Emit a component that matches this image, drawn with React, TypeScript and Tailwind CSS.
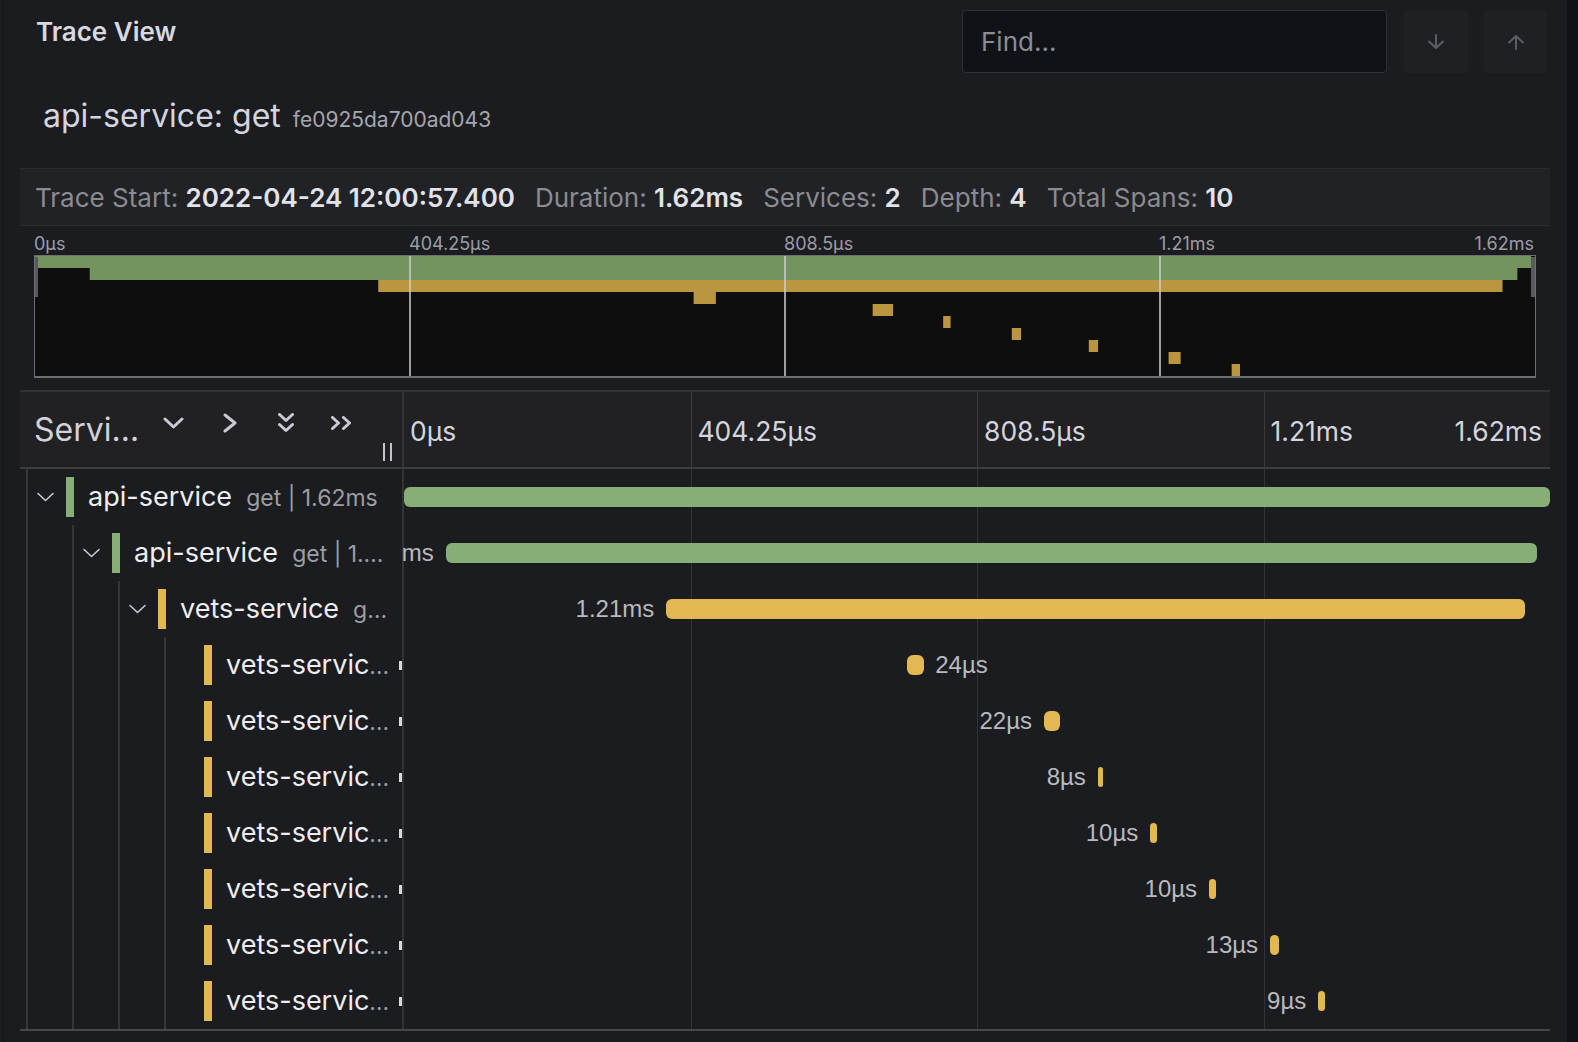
import React from "react";

// total trace duration in µs
const TOTAL = 1617;

type Span = {
  name: string;
  op: string;
  depth: number;
  kids: boolean;
  color: "green" | "yellow";
  start: number;
  dur: number;
  label: string;
  side: "left" | "right";
};

const spans: Span[] = [
  { name: "api-service", op: "get | 1.62ms", depth: 0, kids: true, color: "green", start: 0, dur: 1617, label: "1.62ms", side: "left" },
  { name: "api-service", op: "get | 1.54ms", depth: 1, kids: true, color: "green", start: 59, dur: 1539, label: "1.54ms", side: "left" },
  { name: "vets-service", op: "get | 1.21ms", depth: 2, kids: true, color: "yellow", start: 370, dur: 1212, label: "1.21ms", side: "left" },
  { name: "vets-service", op: "SELECT petclinic.vets", depth: 3, kids: false, color: "yellow", start: 710, dur: 24, label: "24µs", side: "right" },
  { name: "vets-service", op: "SELECT petclinic.specialties", depth: 3, kids: false, color: "yellow", start: 903, dur: 22, label: "22µs", side: "left" },
  { name: "vets-service", op: "SELECT petclinic.specialties", depth: 3, kids: false, color: "yellow", start: 979, dur: 8, label: "8µs", side: "left" },
  { name: "vets-service", op: "SELECT petclinic.specialties", depth: 3, kids: false, color: "yellow", start: 1053, dur: 10, label: "10µs", side: "left" },
  { name: "vets-service", op: "SELECT petclinic.specialties", depth: 3, kids: false, color: "yellow", start: 1136, dur: 10, label: "10µs", side: "left" },
  { name: "vets-service", op: "SELECT petclinic.specialties", depth: 3, kids: false, color: "yellow", start: 1222, dur: 13, label: "13µs", side: "left" },
  { name: "vets-service", op: "SELECT petclinic.specialties", depth: 3, kids: false, color: "yellow", start: 1290, dur: 9, label: "9µs", side: "left" },
];

const stats = [
  ["Trace Start:", "2022-04-24 12:00:57.400"],
  ["Duration:", "1.62ms"],
  ["Services:", "2"],
  ["Depth:", "4"],
  ["Total Spans:", "10"],
];

export default function App() {
  return (
    <div className="flex h-[1042px] w-full overflow-hidden bg-[#111217] font-['Inter',sans-serif]">
      <div className="flex h-full w-[1567px] shrink-0 flex-col bg-[#1b1c20] shadow-[inset_2px_0_0_#1d1e22,inset_4px_0_0_#151619]">
        {/* title + search */}
        <div className="flex items-start pl-[36px] pr-[20px] pt-[10px]">
          <div className="mt-[6px] text-[26px] font-semibold leading-[32px] text-[#d8d9e0]">Trace View</div>
          <div className="ml-auto flex h-[63px] w-[425px] items-center rounded-[4px] border border-[#2f3035] bg-[#111217] pl-[18px] text-[26px] text-[#8c8c96]">
            Find...
          </div>
          <button className="ml-[17px] flex h-[63px] w-[64px] items-center justify-center rounded-[2px] bg-[#1f2024]">
            <Arrow down />
          </button>
          <button className="ml-[16px] flex h-[63px] w-[63px] items-center justify-center rounded-[2px] bg-[#1f2024]">
            <Arrow />
          </button>
        </div>

        <div className="mt-[23px] flex h-[40px] items-baseline pl-[43px]">
          <span className="text-[32px] leading-[40px] text-[#d4d5de]">api-service: get</span>
          <span className="ml-[12px] text-[21px] text-[#a4a5ad]">fe0925da700ad043</span>
        </div>

        {/* stats */}
        <div className="ml-[20px] mr-[17px] mt-[32px] flex h-[58px] items-center gap-[20px] border-y border-[#2b2c30] bg-[#212225] pl-[15px] text-[26px]">
          {stats.map(([k, v]) => (
            <div key={k} className="whitespace-nowrap">
              <span className="text-[#8b8b92]">{k}</span>{" "}
              <span className="font-semibold text-[#e2e3ea]">{v}</span>
            </div>
          ))}
        </div>

        {/* minimap */}
        <div className="ml-[34px] grid h-[29px] w-[1500px] grid-cols-4 items-center pt-[4px] text-[18px] text-[#9c9ca4]">
          <span>0µs</span>
          <span>404.25µs</span>
          <span>808.5µs</span>
          <div className="flex justify-between">
            <span>1.21ms</span>
            <span>1.62ms</span>
          </div>
        </div>
        <div className="ml-[34px] w-[1502px] border border-b-2 border-[#6f6f73] bg-[#0e0e0f]">
          <Minimap />
        </div>

        {/* column header */}
        <div className="ml-[20px] mr-[17px] mt-[12px] flex h-[79px] shrink-0 border-y-2 border-b-[#3c3d41] border-t-[#313236] bg-[#212123]">
          <div className="flex w-[382px] shrink-0 items-center pl-[14px]">
            <div className="w-[112px] truncate text-[32px] text-[#d0d1db]">Service &amp; Operation</div>
            <div className="mb-[14px] ml-[17px] flex items-center text-[#c9cad4]">
              <svg width="21" height="12" viewBox="0 0 21 12" fill="none" stroke="currentColor" strokeWidth="3" strokeLinecap="round" strokeLinejoin="round">
                <path d="M2 2l8.5 8 8.5-8" />
              </svg>
              <svg className="ml-[39px]" width="14" height="20" viewBox="0 0 14 20" fill="none" stroke="currentColor" strokeWidth="3" strokeLinecap="round" strokeLinejoin="round">
                <path d="M2 2l10 8-10 8" />
              </svg>
              <svg className="ml-[41px]" width="16" height="20" viewBox="0 0 16 20" fill="none" stroke="currentColor" strokeWidth="3" strokeLinecap="round" strokeLinejoin="round">
                <path d="M1.5 1.5l6.5 6 6.5-6M1.5 11.5l6.5 6 6.5-6" />
              </svg>
              <svg className="ml-[37px]" width="21" height="14" viewBox="0 0 21 14" fill="none" stroke="currentColor" strokeWidth="3" strokeLinecap="round" strokeLinejoin="round">
                <path d="M1.5 1.5l6 5.5-6 5.5M12.5 1.5l6 5.5-6 5.5" />
              </svg>
            </div>
            <div className="mb-[6px] ml-[31px] flex gap-[5px] self-end">
              <div className="h-[18px] w-[2px] bg-[#c2c3cb]" />
              <div className="h-[18px] w-[2px] bg-[#c2c3cb]" />
            </div>
          </div>
          <div className="w-[2px] bg-[#333438]" />
          <div className="grid flex-1 grid-cols-4 text-[26.5px] text-[#d3d4de]">
            <div className="flex items-center pl-[6px] pt-[4px]">0µs</div>
            <div className="flex items-center border-l border-[#3a3b3f] pl-[6px] pt-[4px]">404.25µs</div>
            <div className="flex items-center border-l border-[#3a3b3f] pl-[6px] pt-[4px]">808.5µs</div>
            <div className="flex items-center justify-between border-l border-[#3a3b3f] pl-[6px] pr-[8px] pt-[4px]">
              <span>1.21ms</span>
              <span>1.62ms</span>
            </div>
          </div>
        </div>

        {/* span rows */}
        <div className="ml-[20px] mr-[17px] border-b-2 border-[#46474b]">
          {spans.map((s, i) => (
            <SpanRow key={i} s={s} />
          ))}
        </div>
      </div>
    </div>
  );
}

function Arrow({ down }: { down?: boolean }) {
  return (
    <svg width="18" height="16" viewBox="0 0 18 16" fill="none" stroke="#5c5d63" strokeWidth="2" strokeLinecap="round" strokeLinejoin="round">
      {down ? <path d="M9 1v13M2 7.5l7 6.5 7-6.5" /> : <path d="M9 15V2M2 8.5l7-6.5 7 6.5" />}
    </svg>
  );
}

function Minimap() {
  return (
    <svg className="block" width="1500" height="120" viewBox="0 0 1500 120">
      {spans.map((s, i) => {
        const x = (s.start / TOTAL) * 1500;
        const w = Math.max((s.dur / TOTAL) * 1500, 6);
        return (
          <rect
            key={i}
            x={x}
            y={i * 12}
            width={i === 0 ? 1496 : w}
            height={12}
            fill={s.color === "green" ? "#73935f" : "#b9963f"}
          />
        );
      })}
      <line x1="375" y1="0" x2="375" y2="120" stroke="#cfcfcf" strokeWidth="1.5" />
      <line x1="750" y1="0" x2="750" y2="120" stroke="#cfcfcf" strokeWidth="1.5" />
      <line x1="1125" y1="0" x2="1125" y2="120" stroke="#cfcfcf" strokeWidth="1.5" />
      <rect x="0" y="1" width="3" height="40" fill="#5a5a5e" />
      <rect x="1496" y="1" width="4" height="40" fill="#5a5a5e" />
    </svg>
  );
}

function SpanRow({ s }: { s: Span }) {
  const left = (s.start / TOTAL) * 100;
  const width = (s.dur / TOTAL) * 100;
  const green = s.color === "green";
  return (
    <div className="flex h-[56px]">
      <div className="relative z-10 flex h-full w-[382px] shrink-0 items-center bg-[#1b1c20]">
        {Array.from({ length: s.depth + 1 }).map((_, i) => (
          <div key={i} className="flex h-full w-[46px] shrink-0 items-center">
            <div className="ml-[6px] h-full w-[2px] bg-[#36373b]" />
            {i === s.depth && s.kids && (
              <svg className="ml-[9px]" width="17" height="10" viewBox="0 0 17 10" fill="none" stroke="#c9c9d1" strokeWidth="1.6" strokeLinecap="round" strokeLinejoin="round">
                <path d="M1 1.5l7.5 7 7.5-7" />
              </svg>
            )}
          </div>
        ))}
        <div className={`h-[40px] w-[8px] shrink-0 ${green ? "bg-[#87ae76]" : "bg-[#e3b852]"}`} />
        <div className="ml-[14px] min-w-0 flex-1 truncate text-[23px] leading-[34px] text-[#9d9da4]">
          <span className="text-[27px] text-[#eeeef2]">{s.name}</span>
          <span className="ml-[14px]">{s.op}</span>
        </div>
        <div className={`ml-[8px] h-[9px] w-[3px] shrink-0 ${s.kids ? "" : "bg-[#d9d9dd]"}`} />
      </div>
      <div className="w-[2px] shrink-0 bg-[#323337]" />
      <div className="relative grid h-full flex-1 grid-cols-4">
        <div />
        <div className="border-l border-[#323337]" />
        <div className="border-l border-[#323337]" />
        <div className="border-l border-[#323337]" />
        <div
          className={`absolute top-1/2 h-[20px] -translate-y-1/2 rounded-[6px] ${green ? "bg-[#87ae76]" : "bg-[#e3b852]"}`}
          style={{ left: `${left}%`, width: `${width}%` }}
        />
        <span
          className="absolute top-1/2 -translate-y-1/2 whitespace-nowrap font-['Liberation_Sans',Arial,sans-serif] text-[24px] text-[#b9b9bd]"
          style={
            s.side === "left"
              ? { right: `calc(${100 - left}% + 12px)` }
              : { left: `calc(${left + width}% + 11px)` }
          }
        >
          {s.label}
        </span>
      </div>
    </div>
  );
}
